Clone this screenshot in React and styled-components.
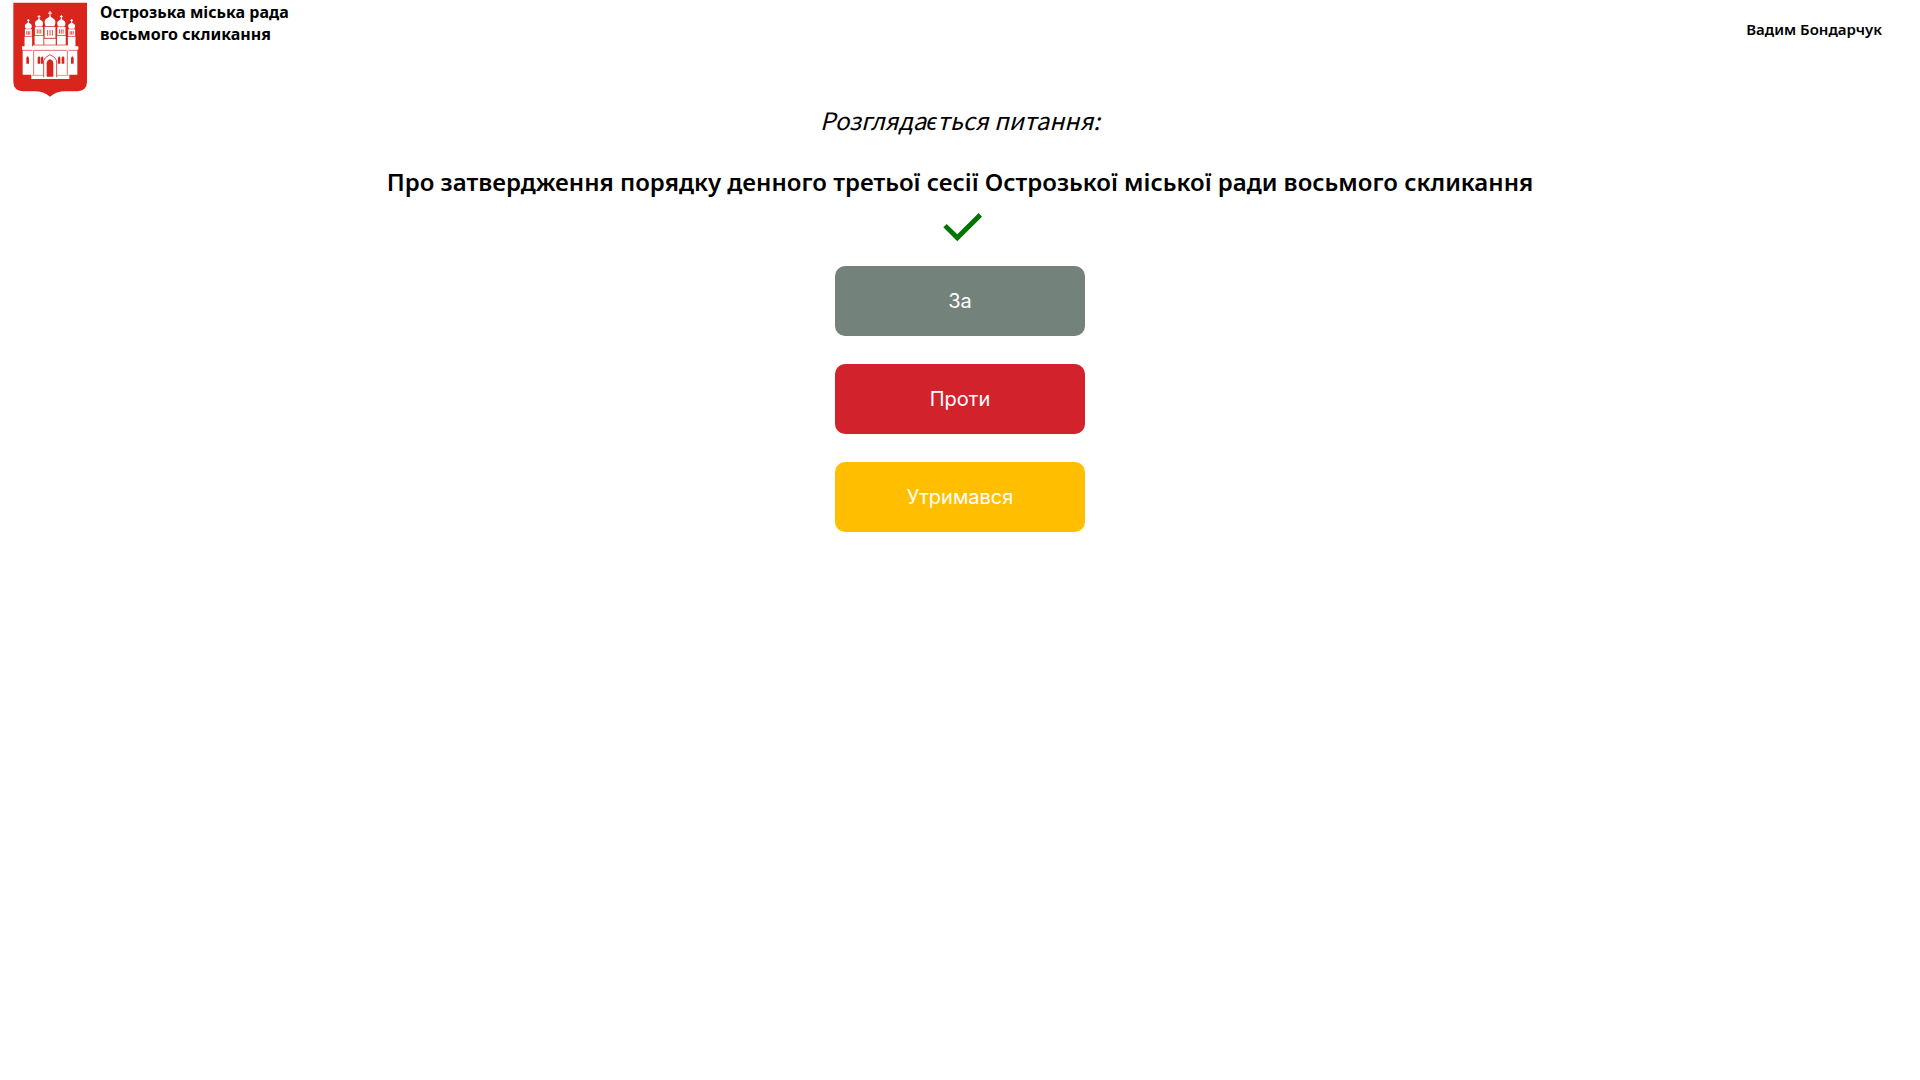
import React from "react";
import styled, { createGlobalStyle } from "styled-components";

const GlobalStyle = createGlobalStyle`
  *, *::before, *::after { box-sizing: border-box; }
  body {
    margin: 0;
    background: #ffffff;
    color: #000000;
    font-family: "Noto Sans", sans-serif;
  }
`;

const Header = styled.header`
  display: flex;
  align-items: flex-start;
  justify-content: space-between;
`;

const Brand = styled.div`
  display: flex;
  align-items: flex-start;
`;

const Emblem = styled.svg`
  display: block;
  flex: none;
  width: 100px;
  height: 100px;
`;

const Council = styled.div`
  font-size: 16px;
  font-weight: 700;
  line-height: 22px;
  padding-top: 1px;
`;

const User = styled.div`
  padding: 18px 38px 0 0;
  font-size: 15px;
  font-weight: 600;
  line-height: 22px;
`;

const Main = styled.main`
  display: flex;
  flex-direction: column;
  align-items: center;
  text-align: center;
`;

const Caption = styled.p`
  margin: 2px 0 0;
  font-family: "Noto Sans CJK SC", "Noto Sans", sans-serif;
  font-size: 24px;
  font-style: italic;
  line-height: 36px;
`;

const Question = styled.h1`
  margin: 26px 0 0;
  font-size: 24px;
  font-weight: 600;
  line-height: 36px;
`;

const Check = styled.svg`
  display: block;
  width: 50px;
  height: 50px;
  margin: 2px 0 14px;
  fill: #007500;
`;

const Votes = styled.div`
  display: flex;
  flex-direction: column;
  gap: 28px;
`;

const VoteButton = styled.button`
  width: 250px;
  height: 70px;
  padding: 0;
  border: 0;
  border-radius: 10px;
  background: ${(p) => p.$color};
  color: #ffffff;
  font-family: Inter, sans-serif;
  font-size: 20px;
  font-weight: 400;
  line-height: 24px;
  cursor: pointer;
`;

const votes = [
  { label: "За", color: "#74827c" },
  { label: "Проти", color: "#d2232d" },
  { label: "Утримався", color: "#ffbf00" },
];

const towers = [
  { x: 85, top: 57, scale: 0.83, base: 142 },
  { x: 215, top: 57, scale: 0.83, base: 142 },
  { x: 117, top: 45, scale: 0.98, base: 142 },
  { x: 184, top: 45, scale: 0.98, base: 142 },
  { x: 150, top: 33, scale: 1.3, base: 142 },
];

function Tower({ x, top, scale, base }) {
  const s = scale;
  const y = (v) => top + v * s;
  const w = 12.5 * s;
  return (
    <g>
      <path
        d={`M${x} ${top} V${y(16)} M${x - 4.5 * s} ${y(5)} H${x + 4.5 * s}`}
        stroke="#fff"
        strokeWidth="3"
      />
      <path
        d={`M${x} ${y(11)} C${x + 2} ${y(16)} ${x + w} ${y(17)} ${x + w} ${y(25)} Q${x + w} ${y(31)} ${x + w - 3} ${y(35)} H${x - w + 3} Q${x - w} ${y(31)} ${x - w} ${y(25)} C${x - w} ${y(17)} ${x - 2} ${y(16)} ${x} ${y(11)}Z`}
        fill="#fff"
      />
      <rect x={x - w} y={y(37)} width={w * 2} height={y(62) - y(37)} fill="#fff" />
      <path
        d={`M${x - 5.5 * s} ${y(44)} V${y(57)} M${x} ${y(44)} V${y(57)} M${x + 5.5 * s} ${y(44)} V${y(57)}`}
        stroke="#da251d"
        strokeWidth="2.4"
      />
      <rect x={x - w - 1} y={y(64)} width={w * 2 + 2} height={base - y(64)} fill="#fff" />
    </g>
  );
}

function CoatOfArms() {
  return (
    <Emblem viewBox="0 0 300 300" role="img" aria-label="Герб Острога">
      <path
        d="M40 8H261V245Q261 271 232 274H197Q169 274 150 290Q131 274 103 274H69Q40 271 40 245Z"
        fill="#da251d"
      />
      {towers.map((t) => (
        <Tower key={t.x} {...t} />
      ))}
      <path d="M66 139H99V135H204V139H235V149H232V224H208V237H94V224H68V149H66Z" fill="#fff" />
      <g fill="none" stroke="#da251d" strokeWidth="2">
        <path d="M66 151H98M205 151H235M99 135H204M102 151H200" />
        <path d="M101 151V224M202 151V224" />
        <path d="M96 226H130M171 226H206" strokeWidth="1.5" />
        <path d="M131 232V182Q133 172 150 164Q168 172 170 182V232" strokeWidth="2.5" />
      </g>
      <path d="M140 230V190Q141 180 150 178Q159 180 160 190V230Z" fill="#da251d" />
      <g fill="#da251d">
        <path d="M79 191V175Q83 163 87 175V191Z" />
        <path d="M213 191V175Q217 163 221 175V191Z" />
        <path d="M113 191V173Q117 164 121 173V191Z" />
        <path d="M123 191V173Q127 164 130 173V191Z" />
        <path d="M174 191V173Q178 164 181 173V191Z" />
        <path d="M185 191V173Q189 164 193 173V191Z" />
      </g>
    </Emblem>
  );
}

export default function App() {
  return (
    <>
      <GlobalStyle />
      <Header>
        <Brand>
          <CoatOfArms />
          <Council>
            Острозька міська рада
            <br />
            восьмого скликання
          </Council>
        </Brand>
        <User>Вадим Бондарчук</User>
      </Header>
      <Main>
        <Caption>Розглядається питання:</Caption>
        <Question>
          Про затвердження порядку денного третьої сесії Острозької міської ради восьмого скликання
        </Question>
        <Check viewBox="0 0 50 50" aria-hidden="true">
          <path d="M8.3 25.3L11.7 22L22.3 32.3L43.7 11L47 14.7L22.3 39.3Z" />
        </Check>
        <Votes>
          {votes.map((v) => (
            <VoteButton key={v.label} type="button" $color={v.color}>
              {v.label}
            </VoteButton>
          ))}
        </Votes>
      </Main>
    </>
  );
}
